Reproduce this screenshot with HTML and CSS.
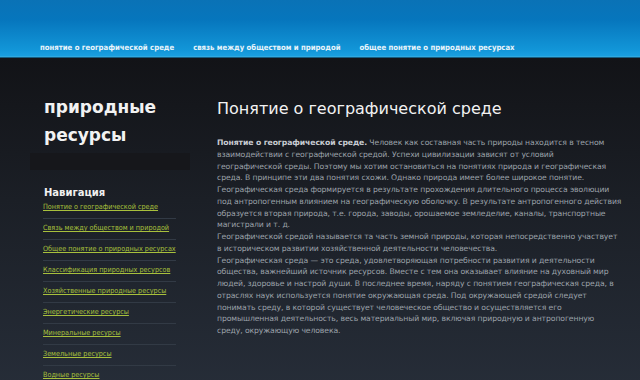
FILE: index.html
```html
<!DOCTYPE html>
<html lang="ru">
  <head>
    <meta charset="UTF-8" />
    <title>природные ресурсы</title>
    <link rel="stylesheet" href="styles.css">
  </head>
  <body>
    <!-- Top blue bar with main menu -->
    <div id="header">
      <div id="topMenu">
        <a href="#">понятие о географической среде</a>
        <a href="#">связь между обществом и природой</a>
        <a href="#">общее понятие о природных ресурсах</a>
      </div>
    </div>

    <div id="page">
      <div id="sidebar">
        <h1 class="site-title">природные<br>ресурсы</h1>
        <div class="title-band"></div>
        <h2 class="nav-title">Навигация</h2>
        <ul class="nav-list">
          <li><a href="#">Понятие о географической среде</a></li>
          <li><a href="#">Связь между обществом и природой</a></li>
          <li><a href="#">Общее понятие о природных ресурсах</a></li>
          <li><a href="#">Классификация природных ресурсов</a></li>
          <li><a href="#">Хозяйственные природные ресурсы</a></li>
          <li><a href="#">Энергетические ресурсы</a></li>
          <li><a href="#">Минеральные ресурсы</a></li>
          <li><a href="#">Земельные ресурсы</a></li>
          <li><a href="#">Водные ресурсы</a></li>
        </ul>
      </div>

      <div id="content">
        <h2 class="page-title">Понятие о географической среде</h2>
        <p class="text">
          <strong>Понятие о географической среде.</strong> Человек как составная часть природы находится в тесном<br>
          взаимодействии с географической средой. Успехи цивилизации зависят от условий<br>
          географической среды. Поэтому мы хотим остановиться на понятиях природа и географическая<br>
          среда. В принципе эти два понятия схожи. Однако природа имеет более широкое понятие.<br>
          Географическая среда формируется в результате прохождения длительного процесса эволюции<br>
          под антропогенным влиянием на географическую оболочку. В результате антропогенного действия<br>
          образуется вторая природа, т.е. города, заводы, орошаемое земледелие, каналы, транспортные<br>
          магистрали и т. д.<br>
          Географической средой называется та часть земной природы, которая непосредственно участвует<br>
          в историческом развитии хозяйственной деятельности человечества.<br>
          Географическая среда — это среда, удовлетворяющая потребности развития и деятельности<br>
          общества, важнейший источник ресурсов. Вместе с тем она оказывает влияние на духовный мир<br>
          людей, здоровье и настрой души. В последнее время, наряду с понятием географическая среда, в<br>
          отраслях наук используется понятие окружающая среда. Под окружающей средой следует<br>
          понимать среду, в которой существует человеческое общество и осуществляется его<br>
          промышленная деятельность, весь материальный мир, включая природную и антропогенную<br>
          среду, окружающую человека.
        </p>
      </div>
    </div>
  </body>
</html>
```

FILE: styles.css
```css
body {
  margin: 0;
  font-family: "DejaVu Sans", Verdana, sans-serif;
  background: linear-gradient(to bottom, #121317 58px, #1b1f26 200px, #262d38 100%);
  min-height: 380px;
  color: #9ca2aa;
  overflow: hidden;
}
/* Blue top bar */
#header {
  height: 56px;
  background: linear-gradient(to bottom, #0a72b6 0, #0676bd 20px, #1296d8 50px, #1a9fe0 56px);
  border-bottom: 1px solid #2fa9df;
  box-shadow: 0 1px 0 #155c80;
}
#topMenu {
  display: flex;
  gap: 19px;
  padding: 43px 0 0 40px;
}
#topMenu a {
  color: #e8f4fb;
  font-family: "DejaVu Sans Condensed", "DejaVu Sans", sans-serif;
  font-size: 7.7px;
  font-weight: bold;
  text-decoration: none;
}
#page {
  display: flex;
  padding: 0 0 0 30px;
  gap: 27px;
}
#sidebar {
  width: 160px;
  flex-shrink: 0;
}
.site-title {
  margin: 0;
  padding: 36px 0 0 14px;
  color: #f2f2f2;
  font-size: 17px;
  line-height: 28px;
  font-weight: bold;
}
.title-band {
  height: 17px;
  margin-top: 4px;
  background: #16171b;
}
.nav-title {
  margin: 17px 0 0 14px;
  font-size: 10px;
  color: #f0f0f0;
}
.nav-list {
  list-style: none;
  margin: 0 0 0 13px;
  padding: 0;
  width: 133px;
}
.nav-list li {
  height: 20px;
  border-bottom: 1px solid #323a45;
  font-family: "DejaVu Sans Condensed", "DejaVu Sans", sans-serif;
  font-size: 7.2px;
  line-height: 18px;
  white-space: nowrap;
}
.nav-list a {
  color: #a8c03c;
}
#content {
  width: 415px;
}
.page-title {
  margin: 0;
  padding-top: 41px;
  font-size: 16px;
  font-weight: normal;
  color: #f2f2f2;
  line-height: 22px;
}
.text {
  margin: 17px 0 0;
  font-size: 7.7px;
  line-height: 11.75px;
  letter-spacing: -0.1px;
}
.text strong {
  color: #c8ccd2;
}
```
